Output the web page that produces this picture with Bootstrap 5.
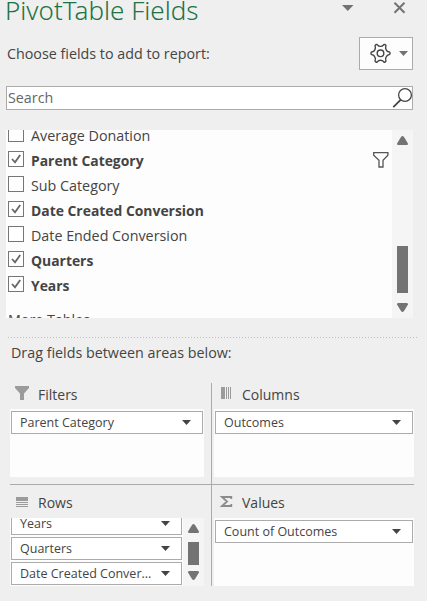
<!DOCTYPE html>
<html lang="en">
<head>
<meta charset="utf-8">
<meta name="viewport" content="width=device-width, initial-scale=1">
<title>PivotTable Fields</title>
<link href="https://cdn.jsdelivr.net/npm/bootstrap@5.3.0/dist/css/bootstrap.min.css" rel="stylesheet">
<style>
body{background:#efefef;color:#444;font-family:"Open Sans","Noto Sans",sans-serif;font-size:14.3px;line-height:25px;height:601px;white-space:nowrap}
svg{display:block;flex:none}
.pane{height:601px;padding:0 14px 0 6px}
.pane-head{height:37px;margin-right:6px}
.pane-title{font:300 26px/36px "Noto Sans","Open Sans",sans-serif;color:#217346;margin:-8px 0 0 -1px}
.head-icons{gap:39px;padding-top:2px}
.prompt{margin:4px 0 0 1px}
.tools{width:54px;height:33px;border:1px solid #ababab;background:#fdfdfd;padding:0 4px 0 10px}
.find{height:24px;width:407px;margin-top:16px;border:1px solid #ababab;background:#fff;color:#666;padding-left:1px;line-height:22px}
.find svg{margin-right:-1px}
.field-list{width:407px;height:188px;margin-top:20px;background:#fdfdfd}
.fields{padding:0 2px;margin-top:-7px}
.field{height:25px}
.field b{font-size:13.9px}
.more-tables{margin-top:9px}
.tick{width:16px;height:16px;border:1px solid #767676;background:#fff;margin:3px 7px 0 0}
.funnel{margin:4px 1px 0 auto}
.track{width:21px;background:#f5f5f5}
.track svg{margin-top:6px}
.thumb{width:11px;background:#737373}
.field-list .thumb{height:47px;margin-top:101px}
.field-list .thumb + svg{margin-top:10px}
.rows-drop .thumb{height:23px;margin-top:9px}
.divider{height:1px;width:409px;margin:19px 0 0 2px;background:repeating-linear-gradient(90deg,#bdbdbd 0 1px,transparent 1px 3px)}
.drag{margin:2px 0 0 5px}
.areas{display:grid;grid-template-columns:201px 203px;grid-template-rows:101px 103px;margin:18px 0 0 4px;width:404px}
.area-l{border-right:1px solid #ababab;width:202px;padding-right:7px}
.area-r{padding-left:3px}
.area-top{border-bottom:1px solid #ababab;height:102px}
.area-bot{height:102px}
.area-name{height:26px;font-size:14px;line-height:24px}
.area-bot .area-name{height:34px;padding-top:7px}
.glyph{width:28px}
.area-r .glyph{width:28px}
.drop{height:68px;background:#fdfdfd;padding:2px 1px 0}
.chip{height:23px;border:1px solid #ababab;background:#fff;font-size:12.5px;line-height:20px;padding:1px 11px 0 8px;flex:none}
.chips{width:172px;margin-top:-6px;gap:2px;padding-left:1px}
.drop.rows-drop{padding:0}
</style>
<script src="https://cdn.jsdelivr.net/npm/bootstrap@5.3.0/dist/js/bootstrap.bundle.min.js"></script>
</head>
<body class="overflow-hidden">
<main class="pane d-flex flex-column">
  <header class="pane-head d-flex justify-content-between align-items-start">
    <h1 class="pane-title">PivotTable Fields</h1>
    <div class="head-icons d-flex">
      <svg width="12" height="12"><path d="M0 3h11.5L5.800 9z" fill="#737373"/></svg>
      <svg width="14" height="12"><path d="M1.500 .8l10 10M11.500 .8l-10 10" stroke="#737373" stroke-width="2"/></svg>
    </div>
  </header>
  <div class="d-flex justify-content-between">
    <div class="prompt">Choose fields to add to report:</div>
    <button class="tools d-flex align-items-center justify-content-between" aria-label="Tools">
      <svg width="21" height="21" viewBox="0 0 21 21" fill="none" stroke="#444" stroke-width="1.4" stroke-linejoin="round"><path d="M5.800 1.600Q7 1 7.700 2.200Q8.400 3.400 10.500 3.400T13.300 2.200Q14 1 15.200 1.600Q16.400 2.300 15.800 3.600Q15.200 5.200 16.200 6.800Q17.200 8.700 18.800 8.800Q20.100 9 20.100 10.300T18.800 11.800Q17.200 11.900 16.200 13.800Q15.200 15.400 15.800 17Q16.400 18.300 15.200 19Q14 19.600 13.300 18.400Q12.600 17.200 10.500 17.200T7.700 18.400Q7 19.600 5.800 19Q4.600 18.300 5.200 17Q5.800 15.400 4.800 13.800Q3.800 11.900 2.200 11.800Q.9 11.600 .9 10.300T2.200 8.800Q3.800 8.700 4.800 6.800Q5.800 5.200 5.200 3.600Q4.600 2.300 5.800 1.600Z"/><circle cx="10.500" cy="10.300" r="3.300"/></svg>
      <svg width="9" height="5"><path d="M0 0h9L4.500 5z" fill="#737373"/></svg>
    </button>
  </div>
  <div class="find d-flex justify-content-between"><span>Search</span>
    <svg width="21" height="22" fill="none" stroke="#444"><circle cx="13" cy="8" r="6.400" stroke-width="1.300"/><path d="M8.600 12.800L1.300 20.200" stroke-width="1.800"/></svg>
  </div>
  <section class="field-list d-flex overflow-hidden">
    <div class="fields flex-grow-1">
      <div class="field d-flex"><i class="tick"></i>Average Donation</div>
      <div class="field d-flex"><i class="tick"><svg width="14" height="14"><path d="M3 7l3 3.300L11.200 3" fill="none" stroke="#666" stroke-width="1.800"/></svg></i><b>Parent Category</b>
        <svg class="funnel" width="16" height="16"><path d="M.7.7h14.200v2.600L10 8.200V15H6V8.200L.7 3.300z" fill="#fff" stroke="#555" stroke-width="1.300"/></svg></div>
      <div class="field d-flex"><i class="tick"></i>Sub Category</div>
      <div class="field d-flex"><i class="tick"><svg width="14" height="14"><path d="M3 7l3 3.300L11.200 3" fill="none" stroke="#666" stroke-width="1.800"/></svg></i><b>Date Created Conversion</b></div>
      <div class="field d-flex"><i class="tick"></i>Date Ended Conversion</div>
      <div class="field d-flex"><i class="tick"><svg width="14" height="14"><path d="M3 7l3 3.300L11.200 3" fill="none" stroke="#666" stroke-width="1.800"/></svg></i><b>Quarters</b></div>
      <div class="field d-flex"><i class="tick"><svg width="14" height="14"><path d="M3 7l3 3.300L11.200 3" fill="none" stroke="#666" stroke-width="1.800"/></svg></i><b>Years</b></div>
      <div class="field more-tables">More Tables...</div>
    </div>
    <div class="track d-flex flex-column align-items-center">
      <svg width="11" height="9"><path d="M5.500 0Q6.300 0 7 1L11 7.500Q11 9 10 9H1Q0 9 0 7.500L4 1Q4.700 0 5.500 0z" fill="#737373"/></svg>
      <div class="thumb"></div>
      <svg width="11" height="9"><path d="M5.500 9Q4.700 9 4 8L0 1.500Q0 0 1 0H10Q11 0 11 1.500L7 8Q6.300 9 5.500 9z" fill="#737373"/></svg>
    </div>
  </section>
  <div class="divider"></div>
  <div class="drag">Drag fields between areas below:</div>
  <section class="areas">
    <div class="area-l area-top">
      <div class="area-name d-flex"><svg class="glyph" height="18"><path d="M5 3h14v2L14 10.500V17H10V10.500L5 5z" fill="#9b9b9b"/></svg><span>Filters</span></div>
      <div class="drop"><div class="chip d-flex justify-content-between align-items-center">Parent Category<svg width="9" height="6"><path d="M0 0h9L4.500 5z" fill="#444"/></svg></div></div>
    </div>
    <div class="area-r area-top">
      <div class="area-name d-flex"><svg class="glyph" height="18" fill="#9b9b9b"><path d="M7 4h4v12H7zM12 4h1v12H12zM14 4h1v12H14zM16 4h1v12H16z"/></svg><span>Columns</span></div>
      <div class="drop"><div class="chip d-flex justify-content-between align-items-center">Outcomes<svg width="9" height="6"><path d="M0 0h9L4.500 5z" fill="#444"/></svg></div></div>
    </div>
    <div class="area-l area-bot">
      <div class="area-name d-flex"><svg class="glyph" height="18" fill="#9b9b9b"><path d="M6 6h12v4H6zM6 11h12v1H6zM6 13h12v1H6zM6 15h12v1H6z"/></svg><span>Rows</span></div>
      <div class="drop rows-drop d-flex justify-content-between overflow-hidden">
        <div class="chips d-flex flex-column">
          <div class="chip d-flex justify-content-between align-items-center">Years<svg width="9" height="6"><path d="M0 0h9L4.500 5z" fill="#444"/></svg></div>
          <div class="chip d-flex justify-content-between align-items-center">Quarters<svg width="9" height="6"><path d="M0 0h9L4.500 5z" fill="#444"/></svg></div>
          <div class="chip d-flex justify-content-between align-items-center">Date Created Conver...<svg width="9" height="6"><path d="M0 0h9L4.500 5z" fill="#444"/></svg></div>
        </div>
        <div class="track d-flex flex-column align-items-center">
          <svg width="11" height="9"><path d="M5.500 0Q6.300 0 7 1L11 7.500Q11 9 10 9H1Q0 9 0 7.500L4 1Q4.700 0 5.500 0z" fill="#737373"/></svg>
          <div class="thumb"></div>
          <svg width="11" height="9"><path d="M5.500 9Q4.700 9 4 8L0 1.500Q0 0 1 0H10Q11 0 11 1.500L7 8Q6.300 9 5.500 9z" fill="#737373"/></svg>
        </div>
      </div>
    </div>
    <div class="area-r area-bot">
      <div class="area-name d-flex"><svg class="glyph" height="18"><path d="M17.300 8V6H8L13 10.500L8 15H17.300V13" fill="none" stroke="#8c8c8c" stroke-width="1.800"/></svg><span>Values</span></div>
      <div class="drop"><div class="chip d-flex justify-content-between align-items-center">Count of Outcomes<svg width="9" height="6"><path d="M0 0h9L4.500 5z" fill="#444"/></svg></div></div>
    </div>
  </section>
</main>
</body>
</html>
